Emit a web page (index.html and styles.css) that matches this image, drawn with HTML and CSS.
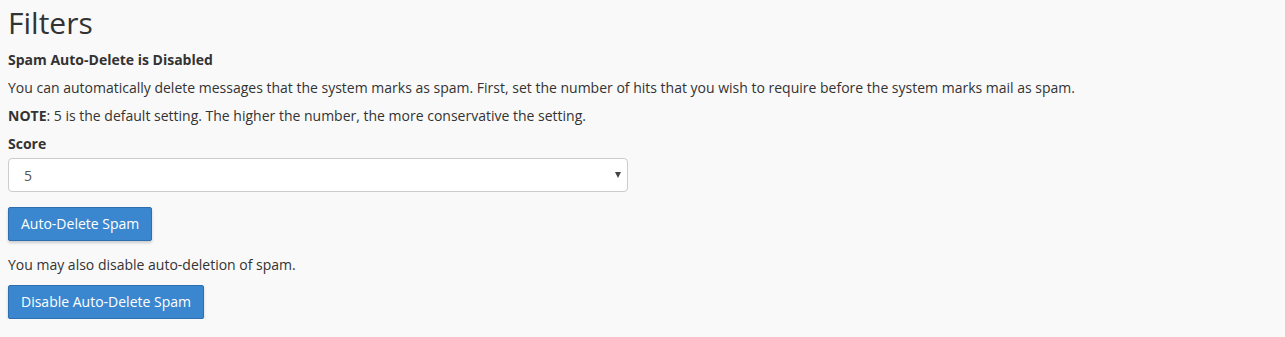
FILE: index.html
```html
<!DOCTYPE html>
<html>
<head>
<meta charset="utf-8">
<link rel="stylesheet" href="styles.css">
</head>
<body>
<div class="page">
  <h1 class="title">Filters</h1>
  <p class="status">Spam Auto-Delete is Disabled</p>
  <p class="text">You can automatically delete messages that the system marks as spam. First, set the number of hits that you wish to require before the system marks mail as spam.</p>
  <p class="text"><strong>NOTE</strong>: 5 is the default setting. The higher the number, the more conservative the setting.</p>
  <label class="label" for="score">Score</label>
  <div class="select-wrap">
    <select id="score" class="select">
      <option>5</option>
    </select>
    <span class="caret"></span>
  </div>
  <button class="btn btn-first">Auto-Delete Spam</button>
  <p class="text text-also">You may also disable auto-deletion of spam.</p>
  <button class="btn">Disable Auto-Delete Spam</button>
</div>
</body>
</html>
```
FILE: styles.css
```css
html, body {
  margin: 0;
  padding: 0;
  background: #f9f9f9;
}
body {
  font-family: "Open Sans", "Liberation Sans", sans-serif;
  font-size: 14px;
  line-height: 20px;
  color: #333;
}
.page {
  padding: 6px 8px 0 8px;
  display: flex;
  flex-direction: column;
  align-items: flex-start;
}
.title {
  margin: 0 0 11px 0;
  font-size: 30px;
  font-weight: 400;
  line-height: 33px;
}
.status {
  margin: 0 0 8px 0;
  font-weight: 700;
}
.text {
  margin: 0 0 8px 0;
}
.text strong {
  font-weight: 700;
}
.label {
  font-weight: 700;
  margin-bottom: 4px;
}
.select-wrap {
  position: relative;
  width: 620px;
}
.select {
  display: block;
  width: 620px;
  height: 34px;
  box-sizing: border-box;
  -webkit-appearance: none;
  appearance: none;
  background: #fff;
  border: 1px solid #ccc;
  border-radius: 4px;
  padding: 0 12px 0 15px;
  font-family: "Open Sans", "Liberation Sans", sans-serif;
  font-size: 14px;
  color: #555;
}
.caret {
  position: absolute;
  right: 7px;
  top: 14px;
  width: 0;
  height: 0;
  border-left: 3.5px solid transparent;
  border-right: 3.5px solid transparent;
  border-top: 6px solid #444;
}
.btn {
  height: 34px;
  box-sizing: border-box;
  padding: 0 12px;
  background: #3a87cf;
  color: #fff;
  border: 1px solid #2d6faf;
  border-radius: 2px;
  box-shadow: 0 2px 3px rgba(0, 0, 0, 0.18);
  font-family: "Open Sans", "Liberation Sans", sans-serif;
  font-size: 14px;
  line-height: 20px;
  cursor: pointer;
}
.btn-first {
  margin-top: 15px;
  margin-bottom: 14px;
}
.text-also {
  margin-bottom: 10px;
}
```
